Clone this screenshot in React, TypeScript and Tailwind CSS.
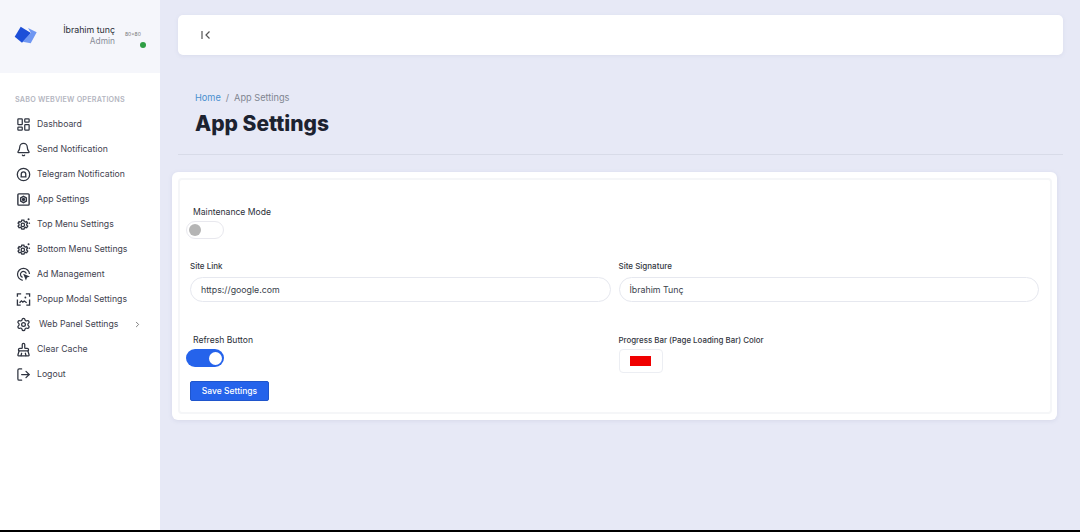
import React from "react";
import { LayoutDashboard, Bell, Settings, BrushCleaning, LogOut, ChevronRight } from "lucide-react";

const sw = 2;
const cls = "w-[15px] h-[15px] text-[#2f3440] shrink-0";

function GearDot() {
  return (
    <svg viewBox="0 0 16 16" className={cls} fill="none" stroke="currentColor" strokeWidth={1.4}>
      <path d="M6.2 3.4h2.2l.4 1.4 1.3.6 1.3-.6 1 1.7-1 1 .1 1.2 1 1-1.1 1.8-1.3-.5-1.2.7-.4 1.3H6.2l-.4-1.3-1.2-.7-1.3.5-1.1-1.8 1-1 0-1.2-1-1 1.1-1.7 1.3.6 1.2-.6z" />
      <circle cx="7.3" cy="8.4" r="1.8" />
      <circle cx="13.4" cy="2.4" r="1.1" fill="currentColor" stroke="none" />
      <path d="M13.6 6.6h1.4" />
    </svg>
  );
}
function CircleBell() {
  return (
    <svg viewBox="0 0 16 16" className={cls} fill="none" stroke="currentColor" strokeWidth={1.4}>
      <circle cx="8" cy="8" r="6.6" />
      <path d="M4.8 10.6h6.4M5.6 10.5V7.6a2.4 2.4 0 0 1 4.8 0v2.9" />
    </svg>
  );
}
function BoxGear() {
  return (
    <svg viewBox="0 0 16 16" className={cls} fill="none" stroke="currentColor" strokeWidth={1.5}>
      <rect x="2" y="2" width="12" height="12" rx="1" />
      <path d="M8 4.6 11 6.3v3.4L8 11.4 5 9.7V6.3z" />
      <circle cx="8" cy="8" r="1" fill="currentColor" />
    </svg>
  );
}
function AdIcon() {
  return (
    <svg viewBox="0 0 16 16" className={cls} fill="none" stroke="currentColor" strokeWidth={1.3}>
      <path d="M7.2 14.2A6.4 6.4 0 1 1 14.4 7.4" />
      <path d="M7 11A3.2 3.2 0 1 1 11 7" />
      <path d="M7.6 7.2l7.2 2.8-3 1.2-1.2 3.2z" fill="currentColor" stroke="none" />
    </svg>
  );
}
function PopupIcon() {
  return (
    <svg viewBox="0 0 16 16" className={cls} fill="none" stroke="currentColor" strokeWidth={1.4}>
      <path d="M1.5 5V2h4M10.5 2h4v3M14.5 8v6h-3.5M5 14H1.5V8" />
      <path d="M3.8 11.4l2-2 1.5 1.4 1.5-1.2 2.6 1.8" />
      <circle cx="10" cy="5.8" r="1" fill="currentColor" stroke="none" />
    </svg>
  );
}

const items: { icon: React.ReactNode; label: string; arrow?: boolean }[] = [
  { icon: <LayoutDashboard className={cls} strokeWidth={sw} />, label: "Dashboard" },
  { icon: <Bell className={cls} strokeWidth={sw} />, label: "Send Notification" },
  { icon: <CircleBell />, label: "Telegram Notification" },
  { icon: <BoxGear />, label: "App Settings" },
  { icon: <GearDot />, label: "Top Menu Settings" },
  { icon: <GearDot />, label: "Bottom Menu Settings" },
  { icon: <AdIcon />, label: "Ad Management" },
  { icon: <PopupIcon />, label: "Popup Modal Settings" },
  { icon: <Settings className={cls} strokeWidth={sw} />, label: "Web Panel Settings", arrow: true },
  { icon: <BrushCleaning className={cls} strokeWidth={sw} />, label: "Clear Cache" },
  { icon: <LogOut className={cls} strokeWidth={sw} />, label: "Logout" },
];

function Toggle({ on }: { on?: boolean }) {
  return on ? (
    <div className="w-[38px] h-[18px] rounded-full bg-[#2563eb] flex items-center justify-end pr-[2px] -ml-1">
      <div className="w-[13px] h-[13px] rounded-full bg-white" />
    </div>
  ) : (
    <div className="w-[38px] h-[18px] rounded-full bg-white border border-[#e8e8ee] flex items-center pl-[2px] -ml-1">
      <div className="w-[12px] h-[12px] rounded-full bg-[#b5b5b5]" />
    </div>
  );
}

function Field({ label, value }: { label: string; value: string }) {
  return (
    <div>
      <div className="text-[8px] leading-[12px] font-medium text-[#33373f] mb-[5px]">{label}</div>
      <div className="h-[25px] pt-[1px] rounded-full border border-[#e6e8ef] bg-white flex items-center pl-[10px] text-[8.8px] text-[#3a3f4b]">
        {value}
      </div>
    </div>
  );
}

export default function App() {
  return (
    <div className="w-[1080px] h-[532px] overflow-hidden flex flex-col bg-[#e7e9f6] font-['Inter',sans-serif]">
      <div className="flex flex-1 min-h-0">
        <aside className="w-[160px] bg-white shrink-0 flex flex-col">
          <div className="h-[73px] bg-[#f5f6fb] flex items-start pl-[14px] pt-[24px]">
            <svg viewBox="0 0 24 18" className="w-[24px] h-[18px] mt-[2px] shrink-0">
              <path d="M6.7.7 17 7 8 16.7.7 10.7z" fill="#1d4fd8" />
              <path d="M14 2 22.7 6.3 16.7 17.3 8.7 15.7 17 7z" fill="#6f97f2" />
            </svg>
            <div className="w-[77px] text-right">
              <div className="text-[8.8px] leading-[12px] text-[#2b2f38]">İbrahim tunç</div>
              <div className="text-[8.4px] leading-[11px] text-[#8a8e99]">Admin</div>
            </div>
            <div className="ml-[10px] pt-[7px] flex flex-col items-end">
              <div className="text-[5px] leading-[6px] text-[#777]">80x80</div>
              <div className="w-[6px] h-[6px] rounded-full bg-[#2f9e44] mt-[5px] -mr-[5px]" />
            </div>
          </div>
          <div className="pl-[15px] pt-[22px] text-[7.2px] leading-[9px] font-semibold tracking-[0.2px] text-[#b4b6bf]">
            SABO WEBVIEW OPERATIONS
          </div>
          <nav className="flex flex-col pt-[8px] pl-[16px]">
            {items.map((it) => (
              <div key={it.label} className="h-[25px] flex items-center">
                <span className="w-[21px] shrink-0 flex">{it.icon}</span>
                <span className={`text-[8.7px] text-[#3f4350] ${it.arrow ? "ml-[2px]" : ""}`}>{it.label}</span>
                {it.arrow && <ChevronRight className="w-[9px] h-[9px] text-[#555] ml-[15px]" strokeWidth={2} />}
              </div>
            ))}
          </nav>
        </aside>
        <main className="flex-1 min-w-0">
          <div className="mt-[15px] ml-[18px] mr-[17px] h-[40px] bg-white rounded-[5px] shadow-[0_1px_4px_rgba(120,130,170,0.12)] flex items-center pl-[23px]">
            <svg viewBox="0 0 10 8" className="w-[10px] h-[8px] text-[#555]" fill="none" stroke="currentColor" strokeWidth={1.2}>
              <path d="M1 0v8M8.5 .5 5 4l3.5 3.5" />
            </svg>
          </div>
          <div className="ml-[18px] mr-[17px] pt-[36px] border-b border-[#d8dbe8] h-[100px]">
            <div className="pl-[17px] text-[9.2px] leading-[14px] text-[#7f8590]">
              <span className="text-[#4a90d0]">Home</span>
              <span className="mx-[5px]">/</span>
              <span>App Settings</span>
            </div>
            <h1 className="pl-[17px] mt-[5px] text-[21px] leading-[28px] font-extrabold text-[#1c2230]">App Settings</h1>
          </div>
          <div className="mt-[17px] ml-[12px] mr-[23px] h-[248px] bg-white rounded-[6px] p-[6px] shadow-[0_1px_4px_rgba(120,130,170,0.15)]">
            <div className="h-full mr-[-1px] rounded-[4px] border-2 border-[#f5f6f8] pl-[10px] pr-[11px] flex flex-col">
              <div className="pt-[25px] pl-[3px] text-[8.6px] leading-[14px] text-[#2b2f38]">Maintenance Mode</div>
              <div className="mt-[2px]"><Toggle /></div>
              <div className="mt-[21px] grid grid-cols-2 gap-x-[8px]">
                <Field label="Site Link" value="https://google.com" />
                <Field label="Site Signature" value="İbrahim Tunç" />
              </div>
              <div className="mt-[31px] grid grid-cols-2 gap-x-[8px]">
                <div>
                  <div className="pl-[3px] text-[8.6px] leading-[14px] text-[#2b2f38]">Refresh Button</div>
                  <div className="mt-[2px]"><Toggle on /></div>
                  <button className="mt-[14px] w-[79px] h-[20px] rounded-[2px] bg-[#2563eb] border border-[#1f55cc] text-white text-[8.5px] font-medium flex items-center justify-center">
                    Save Settings
                  </button>
                </div>
                <div>
                  <div className="text-[7.9px] leading-[14px] font-medium text-[#33373f]">Progress Bar (Page Loading Bar) Color</div>
                  <div className="mt-[2px] w-[44px] h-[24px] rounded-[4px] border border-[#eceef3] bg-white flex items-center justify-center">
                    <div className="w-[21px] h-[10px] bg-[#f00000]" />
                  </div>
                </div>
              </div>
            </div>
          </div>
        </main>
      </div>
      <div className="h-[2px] bg-black shrink-0" />
    </div>
  );
}
